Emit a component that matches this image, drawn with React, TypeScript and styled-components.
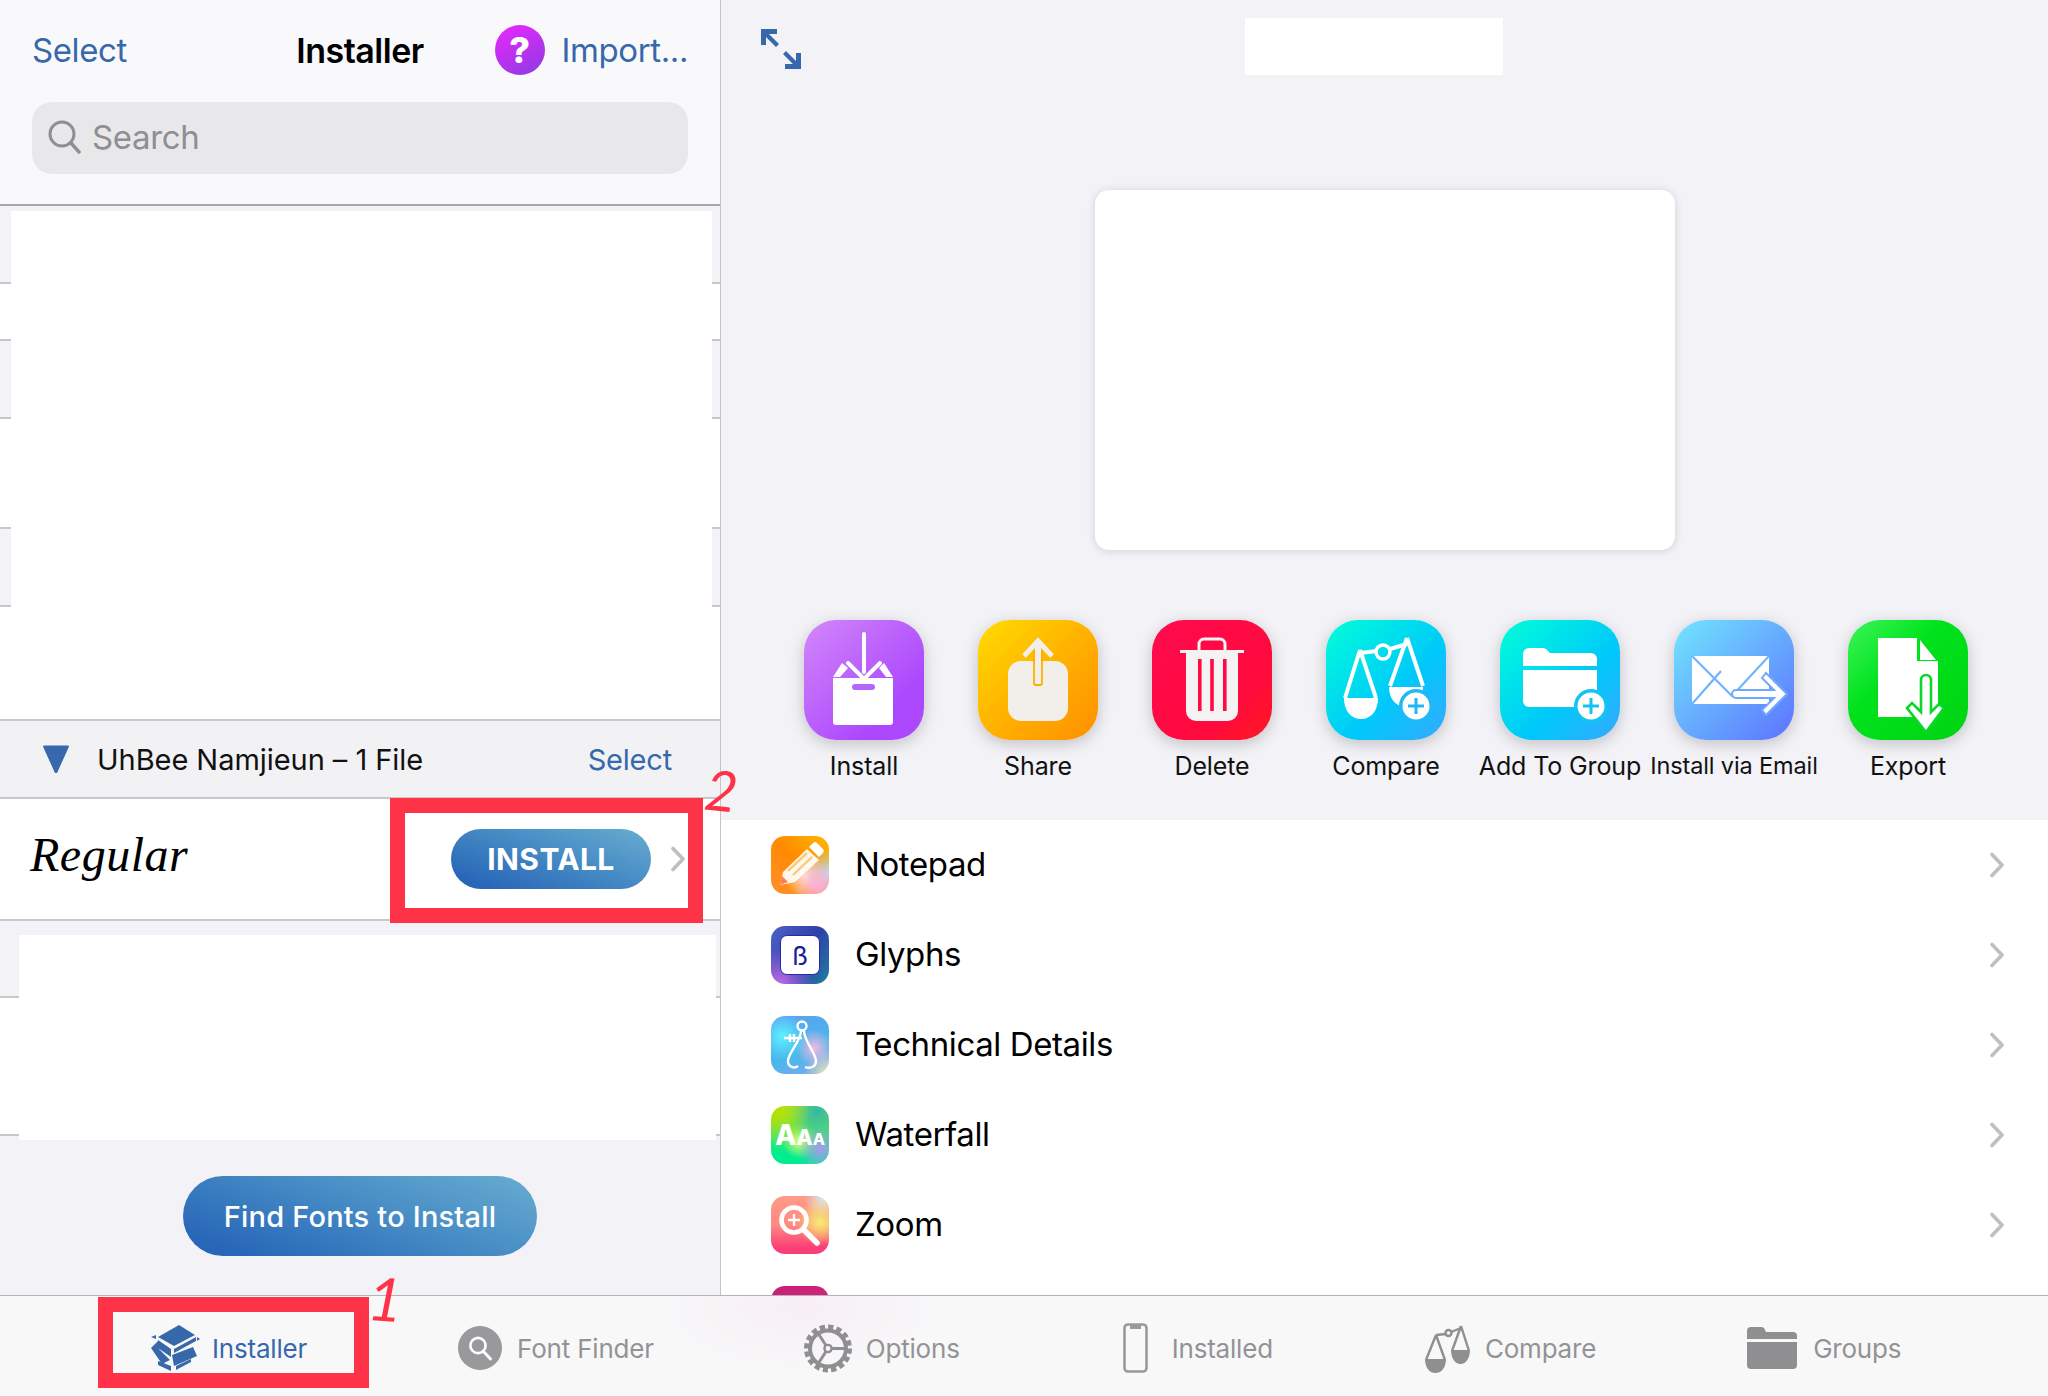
import React from 'react'
import styled, { createGlobalStyle } from 'styled-components'

const BLUE = '#3768ab'
const GREY = '#939396'
const BUTTON_GRADIENT = 'linear-gradient(20deg, #2766b8 10%, #4a8fc6 60%, #68add0 100%)'

const GlobalStyle = createGlobalStyle`
  html, body {
    margin: 0;
    padding: 0;
    background: #fff;
    font-family: Inter, "Noto Sans", "Liberation Sans", sans-serif;
  }
  * { box-sizing: border-box; }
`

const Screen = styled.div`
  position: relative;
  width: 2048px;
  height: 1396px;
  display: flex;
  flex-direction: column;
  overflow: hidden;
`

const Main = styled.div`
  height: 1295px;
  display: flex;
`

const Sidebar = styled.div`
  position: relative;
  width: 721px;
  flex: none;
  display: flex;
  flex-direction: column;
  background: #f2f2f7;
  border-right: 1px solid #c4c4c6;
`

const NavHeader = styled.div`
  height: 206px;
  flex: none;
  padding: 0 32px;
  background: #f9f9fb;
  border-bottom: 2px solid #a9a9ab;
`

const NavRow = styled.div`
  height: 102px;
  display: grid;
  grid-template-columns: 1fr auto 1fr;
  align-items: center;
  padding-bottom: 2px;
`

const NavLink = styled.span`
  font-size: 33px;
  letter-spacing: -0.4px;
  color: ${BLUE};
`

const NavTitle = styled.span`
  font-size: 34px;
  font-weight: 600;
  letter-spacing: -0.5px;
  color: #000;
`

const NavRight = styled.div`
  display: flex;
  align-items: center;
  justify-content: flex-end;
  gap: 17px;
`

const HelpBadge = styled.span`
  width: 50px;
  height: 50px;
  border-radius: 50%;
  display: flex;
  align-items: center;
  justify-content: center;
  background: linear-gradient(150deg, #ee26ff, #8a3ce0);
  color: #fff;
  font-size: 36px;
  font-weight: 800;
`

const SearchBar = styled.div`
  height: 72px;
  border-radius: 20px;
  background: #e8e8ea;
  display: flex;
  align-items: center;
  gap: 11px;
  padding: 0 16px 3px;
  color: #8e8e93;
  font-size: 33px;
  letter-spacing: -0.35px;
`

const Stripes = styled.div`
  position: relative;
  flex: none;
`

const Stripe = styled.div<{ $h: number; $white?: boolean }>`
  height: ${p => p.$h}px;
  background: ${p => (p.$white ? '#fff' : '#f2f2f7')};
  border-bottom: 2px solid #c8c8cb;
`

const Cover = styled.div<{ $top: number; $left: number; $right: number; $bottom: number }>`
  position: absolute;
  top: ${p => p.$top}px;
  left: ${p => p.$left}px;
  right: ${p => p.$right}px;
  bottom: ${p => p.$bottom}px;
  background: #fff;
`

const SectionHeader = styled.div`
  height: 78px;
  flex: none;
  display: flex;
  align-items: center;
  padding: 0 48px 0 42px;
  background: #f2f2f5;
  border-bottom: 2px solid #c8c8cb;
`

const SectionTitle = styled.span`
  flex: 1;
  margin-left: 27px;
  font-size: 29px;
  letter-spacing: -0.05px;
  color: #111;
`

const SectionLink = styled.span`
  font-size: 29px;
  letter-spacing: -0.2px;
  color: ${BLUE};
`

const FontRow = styled.div`
  height: 122px;
  flex: none;
  display: flex;
  align-items: center;
  padding: 0 34px 0 30px;
  background: #fff;
  border-bottom: 2px solid #c8c8cb;
`

const FontSample = styled.span`
  flex: 1;
  margin-top: -10px;
  font-family: "Liberation Serif", serif;
  font-style: italic;
  font-size: 48px;
  letter-spacing: 0.5px;
  color: #000;
`

const InstallButton = styled.span`
  width: 200px;
  height: 60px;
  border-radius: 30px;
  display: flex;
  align-items: center;
  justify-content: center;
  background: ${BUTTON_GRADIENT};
  color: #fff;
  font-size: 30px;
  font-weight: 700;
  letter-spacing: 0.4px;
`

const RowChevron = styled.span`
  margin-left: 19px;
`

const FooterArea = styled.div`
  flex: 1;
  display: flex;
  flex-direction: column;
  align-items: center;
  padding-top: 40px;
  background: #f2f2f7;
`

const FindButton = styled.span`
  width: 354px;
  height: 80px;
  border-radius: 40px;
  display: flex;
  align-items: center;
  justify-content: center;
  background: ${BUTTON_GRADIENT};
  color: #fff;
  font-size: 29px;
  font-weight: 500;
  letter-spacing: 0.2px;
`

const Detail = styled.div`
  flex: 1;
  min-width: 0;
  display: flex;
  flex-direction: column;
  background: #fff;
  overflow: hidden;
`

const Hero = styled.div`
  height: 820px;
  flex: none;
  display: flex;
  flex-direction: column;
  background: #f2f2f7;
`

const TopRow = styled.div`
  height: 190px;
  flex: none;
  display: flex;
  padding: 18px 0 0 40px;
  gap: 444px;
`

const ExpandIcon = styled.svg`
  width: 40px;
  height: 40px;
  margin-top: 11px;
`

const TitleBlock = styled.div`
  width: 258px;
  height: 57px;
  background: #fff;
`

const PreviewCard = styled.div`
  width: 580px;
  height: 360px;
  flex: none;
  margin: 0 auto;
  border-radius: 14px;
  background: #fff;
  box-shadow: 0 1px 8px rgba(0, 0, 0, 0.14);
`

const Actions = styled.div`
  display: flex;
  padding: 70px 0 0 56px;
`

const Action = styled.div`
  width: 174px;
  display: flex;
  flex-direction: column;
  align-items: center;
  gap: 11px;
`

const ActionTile = styled.div<{ $bg: string }>`
  width: 120px;
  height: 120px;
  border-radius: 32px;
  background: ${p => p.$bg};
  box-shadow: 0 4px 16px rgba(0, 0, 0, 0.2);
`

const ActionLabel = styled.span<{ $tight?: boolean }>`
  white-space: nowrap;
  font-size: ${p => (p.$tight ? 23.5 : 25)}px;
  letter-spacing: -0.12px;
  color: #111;
`

const List = styled.div`
  flex: 1;
  overflow: hidden;
  padding-left: 50px;
`

const ListRow = styled.div`
  height: 90px;
  display: flex;
  align-items: center;
  padding-right: 43px;
`

const RowTile = styled.div<{ $bg: string }>`
  position: relative;
  width: 58px;
  height: 58px;
  flex: none;
  border-radius: 14px;
  background: ${p => p.$bg};
  display: flex;
  align-items: center;
  justify-content: center;
  overflow: hidden;
`

const RowLabel = styled.span`
  flex: 1;
  margin: -2px 0 0 26px;
  font-size: 33px;
  letter-spacing: -0.4px;
  color: #000;
`

const BetaCard = styled.div`
  width: 40px;
  height: 40px;
  border-radius: 7px;
  display: flex;
  align-items: center;
  justify-content: center;
  background: #fff;
  border: 1px solid #2a2aa8;
  color: #1c1c9c;
  font-size: 26px;
`

const WaterfallText = styled.span`
  display: flex;
  align-items: baseline;
  color: #fff;
  font-weight: 800;
  line-height: 1;
`

const WaterfallLetter = styled.span<{ $size: number }>`
  font-size: ${p => p.$size}px;
`

const TabBar = styled.div`
  flex: 1;
  display: flex;
  align-items: center;
  padding: 4px 0 0 150px;
  border-top: 1px solid #b4b4b6;
  background:
    radial-gradient(ellipse 150px 70px at 800px 10px, rgba(226, 60, 140, 0.05), transparent),
    #f8f8f9;
`

const Tab = styled.div<{ $after: number; $gap: number }>`
  display: flex;
  align-items: center;
  gap: ${p => p.$gap}px;
  margin-right: ${p => p.$after}px;
`

const TabLabel = styled.span<{ $active?: boolean }>`
  font-size: 26px;
  letter-spacing: -0.2px;
  color: ${p => (p.$active ? BLUE : GREY)};
`

const MarkBox = styled.div<{ $x: number; $y: number; $w: number; $h: number }>`
  position: absolute;
  left: ${p => p.$x}px;
  top: ${p => p.$y}px;
  width: ${p => p.$w}px;
  height: ${p => p.$h}px;
  border: 15px solid #ff3347;
`

const MarkDigit = styled.span<{ $x: number; $y: number; $size: number; $turn: number }>`
  position: absolute;
  left: ${p => p.$x}px;
  top: ${p => p.$y}px;
  font-family: Lato, sans-serif;
  font-size: ${p => p.$size}px;
  font-style: italic;
  line-height: 1;
  color: #ff3347;
  transform: rotate(${p => p.$turn}deg);
`

const Glyph = ({ children, w, h = w, vb }: { children: React.ReactNode; w: number; h?: number; vb?: string }) => (
  <svg width={w} height={h} viewBox={vb || `0 0 ${w} ${h}`} style={{ display: 'block', flex: 'none' }}>
    {children}
  </svg>
)

const SearchGlyph = () => (
  <Glyph w={33} h={34}>
    <circle cx="14" cy="14" r="12" fill="none" stroke="#8e8e93" strokeWidth="3" />
    <path d="M23 23l8 9" stroke="#8e8e93" strokeWidth="3.4" strokeLinecap="round" />
  </Glyph>
)

const Triangle = () => (
  <Glyph w={28} h={28}>
    <path d="M1 1.5a1 1 0 0 1 1-1h24a1 1 0 0 1 1 1L15.5 27a1.6 1.6 0 0 1-3 0z" fill={BLUE} />
  </Glyph>
)

const Chevron = ({ color = '#bfbfc3' }: { color?: string }) => (
  <Glyph w={16} h={26}>
    <path d="M3 2.5L13 13 3 23.5" fill="none" stroke={color} strokeWidth="3.6" strokeLinecap="round" strokeLinejoin="round" />
  </Glyph>
)

const PlusBadge = ({ cx, cy, stroke }: { cx: number; cy: number; stroke: string }) => (
  <g>
    <circle cx={cx} cy={cy} r="17" fill={stroke} />
    <circle cx={cx} cy={cy} r="13.5" fill="#fff" />
    <path d={`M${cx - 8} ${cy}h16M${cx} ${cy - 8}v16`} stroke={stroke} strokeWidth="3" />
  </g>
)

const InstallArt = () => (
  <Glyph w={120}>
    <path d="M60 14v38M44 43l16 16 16-16" fill="none" stroke="#fff" strokeWidth="4" strokeLinecap="round" />
    <path d="M29 57l9-14 6 5-8 9zM89 57l-9-14-5 5 7 9z" fill="#fff" />
    <path d="M29 58h60v44a3 3 0 0 1-3 3H32a3 3 0 0 1-3-3z" fill="#fff" />
    <rect x="48" y="64" width="23" height="6" rx="3" fill="#b566fb" />
  </Glyph>
)

const ShareArt = () => (
  <Glyph w={120}>
    <rect x="30" y="41" width="60" height="60" rx="13" fill="#f2eeea" />
    <path d="M46 36L60 21l14 15" fill="none" stroke="#f2eeea" strokeWidth="5" />
    <path d="M60 24l-3 3v36a2 2 0 0 0 2 2h2a2 2 0 0 0 2-2V27z" fill="#f2eeea" />
    <path d="M56 30v33a2 2 0 0 0 2 2h4a2 2 0 0 0 2-2V30" fill="none" stroke="#ffae00" strokeWidth="1.8" />
  </Glyph>
)

const DeleteArt = () => (
  <Glyph w={120}>
    <path d="M47 31V24a5 5 0 0 1 5-5h16a5 5 0 0 1 5 5v7" fill="none" stroke="#f4f2f2" strokeWidth="3" />
    <rect x="28" y="30" width="64" height="3" fill="#f4f2f2" />
    <path d="M34 33h52v58a10 10 0 0 1-10 10H44a10 10 0 0 1-10-10z" fill="#f4f2f2" />
    <path d="M46 39h3.6v52H46zM58.2 39h3.6v52h-3.6zM71 39h3.6v52H71z" fill="#ff0a45" />
  </Glyph>
)

const CompareArt = () => (
  <Glyph w={120}>
    <path d="M34 33l17-2M64 29l17-5" stroke="#fff" strokeWidth="4" />
    <circle cx="57" cy="32" r="7" fill="none" stroke="#fff" strokeWidth="3.4" />
    <path d="M34 30L19 78M34 30l16 48M81 18L64 66M81 18l16 48" fill="none" stroke="#fff" strokeWidth="4" />
    <path d="M18 78h34c0 13-7 21-17 21s-17-8-17-21z" fill="#fff" />
    <path d="M63 67h34c0 12-7 20-17 20s-17-8-17-20z" fill="#fff" />
    <PlusBadge cx={90} cy={86} stroke="#22b8f6" />
  </Glyph>
)

const FolderArt = () => (
  <Glyph w={120}>
    <path d="M23 46V34a6 6 0 0 1 6-6h14a6 6 0 0 1 5 3l2 2h41a6 6 0 0 1 6 6v7z" fill="#fff" />
    <path d="M23 50h74v37H29a6 6 0 0 1-6-6z" fill="#fff" />
    <PlusBadge cx={91} cy={86} stroke="#12c4f2" />
  </Glyph>
)

const MailArt = () => (
  <Glyph w={120}>
    <rect x="18" y="36" width="77" height="48" fill="#fff" />
    <path d="M18 36l40 40 37-40M18 84l29-33" fill="none" stroke="#6fb4ff" strokeWidth="2.2" />
    <path d="M62 70h38L88 58l4-5 21 21-21 21-4-5 12-12H62a4 4 0 0 1 0-8z" fill="#fff" stroke="#70a8ff" strokeWidth="2" />
  </Glyph>
)

const ExportArt = () => (
  <Glyph w={120}>
    <path d="M30 18h39v23h21v56H30z" fill="#fff" />
    <path d="M72 20l16 20H72z" fill="#fff" />
    <path d="M73 92V60a5 5 0 0 1 10 0v32l8-8 5 4-18 24-19-24 5-5z" fill="#fff" stroke="#0bd62a" strokeWidth="2.6" />
  </Glyph>
)

const PencilArt = () => (
  <Glyph w={58}>
    <path d="M9 49l3-13L36 13l12 11-24 22z" fill="#fff" opacity="0.9" />
    <path d="M17 35l19-18M22 39l19-18" stroke="#ffc776" strokeWidth="2.4" />
    <path d="M9 49l2-9 6 6z" fill="#ff7e4f" />
    <path d="M38 11l4-4a3 3 0 0 1 4 0l6 6a3 3 0 0 1 0 4l-4 4z" fill="#fff" />
  </Glyph>
)

const CaliperArt = () => (
  <Glyph w={58}>
    <g fill="none" stroke="#fff" strokeWidth="2.4">
      <circle cx="31" cy="10" r="4.5" />
      <path d="M30 15c0 10-13 22-13 30 0 6 6 8 10 5M33 15c0 10 12 22 12 30 0 6-6 8-11 6" />
      <path d="M13 22h18M19 18v8M23 18v8" />
    </g>
  </Glyph>
)

const LoupeArt = () => (
  <Glyph w={58}>
    <circle cx="23" cy="24" r="12.5" fill="none" stroke="#fff" strokeWidth="4.6" />
    <path d="M17 24h12M23 18v12" stroke="#fff" strokeWidth="2.4" />
    <path d="M33 34l13 13" stroke="#fff" strokeWidth="5.6" strokeLinecap="round" />
  </Glyph>
)

const CubesTab = () => (
  <Glyph w={50} h={46}>
    <g fill={BLUE}>
      <path d="M8 12L29 0l16 10-21 11z" />
      <path d="M8 15l13 9v8L8 23z" />
      <path d="M24 24l22-12v4L24 28z" />
      <path d="M1 23l7-7 1 8 11 11-8 4z" />
      <path d="M22 30l21-8 4 9-23 10z" />
      <path d="M8 36l13 5v5L8 40zM26 45l15-8v-3l-15 7z" />
      <path d="M1 12l5-2v4zM47 12l3 2-3 2z" />
    </g>
  </Glyph>
)

const FinderTab = () => (
  <Glyph w={44}>
    <circle cx="22" cy="22" r="22" fill="#99999b" />
    <circle cx="20" cy="19.500" r="7.600" fill="none" stroke="#fff" strokeWidth="2.600" />
    <path d="M25.500 25.500l7 7.500" stroke="#fff" strokeWidth="3" strokeLinecap="round" />
  </Glyph>
)

const GearTab = () => (
  <Glyph w={48} h={49} vb="0 0 48 48">
    <g fill="none" stroke="#8f8f92">
      <circle cx="24" cy="24" r="21.500" strokeWidth="5" strokeDasharray="5.2 3.2" />
      <circle cx="24" cy="24" r="18" strokeWidth="4" />
      <circle cx="24" cy="24" r="3.600" strokeWidth="2.400" />
      <path d="M27 24h16M22 21L13 7M22 27l-9 14" strokeWidth="3" />
    </g>
  </Glyph>
)

const PhoneTab = () => (
  <Glyph w={25} h={50}>
    <rect x="1.500" y="1.500" width="22" height="47" rx="3.500" fill="none" stroke="#99999b" strokeWidth="2.600" />
    <rect x="7" y="2" width="11" height="4" fill="#99999b" />
  </Glyph>
)

const ScaleTab = () => (
  <Glyph w={47} h={50}>
    <g fill="none" stroke="#8f8f92" strokeWidth="2.400">
      <path d="M12 12l10-1M27 9l10-4" />
      <circle cx="24.500" cy="10" r="3" />
      <path d="M12 12L2 37M12 12l9 25M37 3l-9 25M37 3l8 25" />
    </g>
    <path d="M1 36h21c0 8-4 14-10.500 14S1 44 1 36zM27 27h19c0 8-4 14-9.500 14S27 35 27 27z" fill="#8f8f92" />
  </Glyph>
)

const FolderTab = () => (
  <Glyph w={50} h={42}>
    <path d="M0 12V4a4 4 0 0 1 4-4h10a4 4 0 0 1 4 3l1 2h27a4 4 0 0 1 4 4v3z" fill="#8f8f92" />
    <path d="M0 15h50v23a4 4 0 0 1-4 4H4a4 4 0 0 1-4-4z" fill="#8f8f92" />
  </Glyph>
)

const stripesTop = [
  { h: 78 },
  { h: 57, white: true },
  { h: 78 },
  { h: 110, white: true },
  { h: 78 },
  { h: 114, white: true },
]

const stripesBottom = [
  { h: 77 },
  { h: 138, white: true },
]

const actions = [
  { label: 'Install', bg: 'linear-gradient(135deg, #d387f9, #ab47fd 75%)', art: <InstallArt /> },
  { label: 'Share', bg: 'linear-gradient(135deg, #ffdc00, #ffae00 55%, #ff8f00)', art: <ShareArt /> },
  { label: 'Delete', bg: 'linear-gradient(135deg, #ff0a4f, #ff0a3c 70%, #ff1a22)', art: <DeleteArt /> },
  { label: 'Compare', bg: 'linear-gradient(135deg, #00ffd9, #00c8fa 60%, #38a8ff)', art: <CompareArt /> },
  { label: 'Add To Group', bg: 'linear-gradient(135deg, #00ffd9, #00c8fa 60%, #38a8ff)', art: <FolderArt /> },
  { label: 'Install via Email', tight: true, bg: 'linear-gradient(135deg, #70e6ff, #5f7eff 90%)', art: <MailArt /> },
  { label: 'Export', bg: 'linear-gradient(135deg, #3df55a, #00e21c 40%, #00d312)', art: <ExportArt /> },
]

const rows = [
  {
    label: 'Notepad',
    bg: 'radial-gradient(circle at 80% 85%, #ffaee0 0, transparent 35%), radial-gradient(circle at 100% 65%, #aee0ff 0, transparent 35%), radial-gradient(circle at 60% 70%, #fff0d0 0, transparent 40%), linear-gradient(45deg, #ff9030, #ff8a00 50%, #ffb800)',
    art: <PencilArt />,
  },
  {
    label: 'Glyphs',
    bg: 'radial-gradient(circle at 15% 100%, #c06be8 0, transparent 45%), linear-gradient(120deg, #4e62c8, #2f3fa8 55%, #1f7f9f)',
    art: <BetaCard>ß</BetaCard>,
  },
  {
    label: 'Technical Details',
    bg: 'radial-gradient(circle at 20% 35%, #5cf2ff 0, transparent 40%), radial-gradient(circle at 75% 55%, #f2b8e0 0, transparent 35%), radial-gradient(circle at 100% 100%, #f5e9b0 0, transparent 30%), linear-gradient(160deg, #5e9ef0, #48b8ec 60%, #7fa8f0)',
    art: <CaliperArt />,
  },
  {
    label: 'Waterfall',
    bg: 'radial-gradient(circle at 85% 75%, #a89af0 0, transparent 35%), radial-gradient(circle at 10% 10%, #b8e000 0, transparent 45%), radial-gradient(circle at 80% 10%, #30b8a8 0, transparent 45%), radial-gradient(circle at 50% 60%, #e0ff70 0, transparent 40%), linear-gradient(180deg, #a0e040, #00ec90 85%)',
    art: (
      <WaterfallText>
        <WaterfallLetter $size={28}>A</WaterfallLetter>
        <WaterfallLetter $size={21}>A</WaterfallLetter>
        <WaterfallLetter $size={16}>A</WaterfallLetter>
      </WaterfallText>
    ),
  },
  {
    label: 'Zoom',
    bg: 'radial-gradient(circle at 85% 45%, #f5ee70 0, transparent 40%), radial-gradient(circle at 90% 5%, #d8e8f0 0, transparent 25%), linear-gradient(180deg, #ff9a88, #ff8a80 50%, #fb3d78 90%)',
    art: <LoupeArt />,
  },
]

const tabs = [
  { label: 'Installer', icon: <CubesTab />, after: 151, gap: 12, active: true },
  { label: 'Font Finder', icon: <FinderTab />, after: 150, gap: 15 },
  { label: 'Options', icon: <GearTab />, after: 163, gap: 14 },
  { label: 'Installed', icon: <PhoneTab />, after: 151, gap: 24 },
  { label: 'Compare', icon: <ScaleTab />, after: 151, gap: 14 },
  { label: 'Groups', icon: <FolderTab />, after: 0, gap: 16 },
]

const App = () => (
  <Screen>
    <GlobalStyle />
    <Main>
      <Sidebar>
        <NavHeader>
          <NavRow>
            <NavLink>Select</NavLink>
            <NavTitle>Installer</NavTitle>
            <NavRight>
              <HelpBadge>?</HelpBadge>
              <NavLink>Import...</NavLink>
            </NavRight>
          </NavRow>
          <SearchBar>
            <SearchGlyph />
            Search
          </SearchBar>
        </NavHeader>
        <Stripes>
          {stripesTop.map((s, i) => (
            <Stripe key={i} $h={s.h} $white={s.white} />
          ))}
          <Cover $top={5} $left={11} $right={8} $bottom={2} />
        </Stripes>
        <SectionHeader>
          <Triangle />
          <SectionTitle>UhBee Namjieun – 1 File</SectionTitle>
          <SectionLink>Select</SectionLink>
        </SectionHeader>
        <FontRow>
          <FontSample>Regular</FontSample>
          <InstallButton>INSTALL</InstallButton>
          <RowChevron>
            <Chevron />
          </RowChevron>
        </FontRow>
        <Stripes>
          {stripesBottom.map((s, i) => (
            <Stripe key={i} $h={s.h} $white={s.white} />
          ))}
          <Cover $top={14} $left={19} $right={4} $bottom={-4} />
        </Stripes>
        <FooterArea>
          <FindButton>Find Fonts to Install</FindButton>
        </FooterArea>
      </Sidebar>
      <Detail>
        <Hero>
          <TopRow>
            <ExpandIcon viewBox="0 0 40 40">
              <path d="M0 0h16v5H8l10 10-3 3L5 8v8H0zM40 40H24v-5h8L22 25l3-3 10 10v-8h5z" fill={BLUE} />
            </ExpandIcon>
            <TitleBlock />
          </TopRow>
          <PreviewCard />
          <Actions>
            {actions.map(a => (
              <Action key={a.label}>
                <ActionTile $bg={a.bg}>{a.art}</ActionTile>
                <ActionLabel $tight={a.tight}>{a.label}</ActionLabel>
              </Action>
            ))}
          </Actions>
        </Hero>
        <List>
          {rows.map(r => (
            <ListRow key={r.label}>
              <RowTile $bg={r.bg}>{r.art}</RowTile>
              <RowLabel>{r.label}</RowLabel>
              <Chevron />
            </ListRow>
          ))}
          <ListRow>
            <RowTile $bg="linear-gradient(135deg, #c41f7c, #d82a70)" />
          </ListRow>
        </List>
      </Detail>
    </Main>
    <TabBar>
      {tabs.map(t => (
        <Tab key={t.label} $after={t.after} $gap={t.gap}>
          {t.icon}
          <TabLabel $active={t.active}>{t.label}</TabLabel>
        </Tab>
      ))}
    </TabBar>
    <MarkBox $x={390} $y={798} $w={313} $h={125} />
    <MarkBox $x={98} $y={1297} $w={271} $h={91} />
    <MarkDigit $x={705} $y={762} $size={56} $turn={6}>2</MarkDigit>
    <MarkDigit $x={368} $y={1268} $size={60} $turn={4}>1</MarkDigit>
  </Screen>
)

export default App
